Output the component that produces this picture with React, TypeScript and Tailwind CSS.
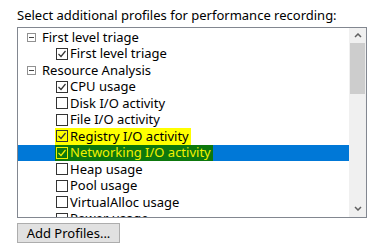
import React from "react";

type Row = {
  label: string;
  group?: boolean;
  checked?: boolean;
  mark?: "yellow" | "selected";
};

const rows: Row[] = [
  { label: "First level triage", group: true },
  { label: "First level triage", checked: true },
  { label: "Resource Analysis", group: true },
  { label: "CPU usage", checked: true },
  { label: "Disk I/O activity" },
  { label: "File I/O activity" },
  { label: "Registry I/O activity", checked: true, mark: "yellow" },
  { label: "Networking I/O activity", checked: true, mark: "selected" },
  { label: "Heap usage" },
  { label: "Pool usage" },
  { label: "VirtualAlloc usage" },
  { label: "Power usage" },
];

function Check({ checked, color }: { checked?: boolean; color: string }) {
  return (
    <svg width="12" height="12" viewBox="0 0 12 12" className="shrink-0">
      <rect x="0.5" y="0.5" width="11" height="11" fill="none" stroke={color} strokeWidth="1" />
      {checked && <path d="M2.5 6 L5 8.5 L9.5 3" fill="none" stroke={color} strokeWidth="1.2" />}
    </svg>
  );
}

function Minus() {
  return (
    <svg width="9" height="9" viewBox="0 0 9 9" className="shrink-0">
      <rect x="0.5" y="0.5" width="8" height="8" fill="#fff" stroke="#919191" />
      <path d="M2 4.5 H7" stroke="#444" strokeWidth="1" />
    </svg>
  );
}

export default function App() {
  return (
    <div className="w-[382px] h-[250px] bg-white text-black text-[13px] leading-none" style={{ fontFamily: "'Noto Sans', 'Open Sans', sans-serif" }}>
      <div className="pl-[17px] pt-[9px] h-[27px]">Select additional profiles for performance recording:</div>
      <div className="ml-[17px] w-[350px] h-[191px] border border-[#828790] flex overflow-hidden">
        <div className="flex-1 flex flex-col overflow-hidden pt-[1px]">
          {rows.map((r, i) => {
            const sel = r.mark === "selected";
            return (
              <div key={i} className={`h-[16.5px] shrink-0 flex items-center ${sel ? "bg-[#0078d7]" : ""}`}>
                {r.group ? (
                  <div className="flex items-center pl-[9px]">
                    <Minus />
                    <span className="ml-[6px]">{r.label}</span>
                  </div>
                ) : (
                  <div
                    className={`flex items-center ml-[37px] h-full pr-[2px] ${
                      r.mark === "yellow" ? "bg-[#ffff00]" : sel ? "bg-[#0d780d] text-[#f2f200]" : ""
                    }`}
                  >
                    <span className="ml-[1px]">
                      <Check checked={r.checked} color={sel ? "#f2f200" : "#333"} />
                    </span>
                    <span className="ml-[2px]">{r.label}</span>
                  </div>
                )}
              </div>
            );
          })}
        </div>
        <div className="w-[17px] bg-[#f0f0f0] flex flex-col items-center">
          <div className="h-[15px] flex items-center justify-center">
            <svg width="8" height="5" viewBox="0 0 8 5">
              <path d="M1 4 L4 1 L7 4" fill="none" stroke="#606060" strokeWidth="1.5" />
            </svg>
          </div>
          <div className="w-[15px] h-[51px] bg-[#cdcdcd]" />
          <div className="flex-1" />
          <div className="h-[17px] flex items-center justify-center">
            <svg width="8" height="5" viewBox="0 0 8 5">
              <path d="M1 1 L4 4 L7 1" fill="none" stroke="#606060" strokeWidth="1.5" />
            </svg>
          </div>
        </div>
      </div>
      <div className="pl-[17px] pt-[5px]">
        <button className="w-[103px] h-[20px] bg-[#e1e1e1] border border-[#adadad] text-[13px] leading-none">
          Add Profiles...
        </button>
      </div>
    </div>
  );
}
